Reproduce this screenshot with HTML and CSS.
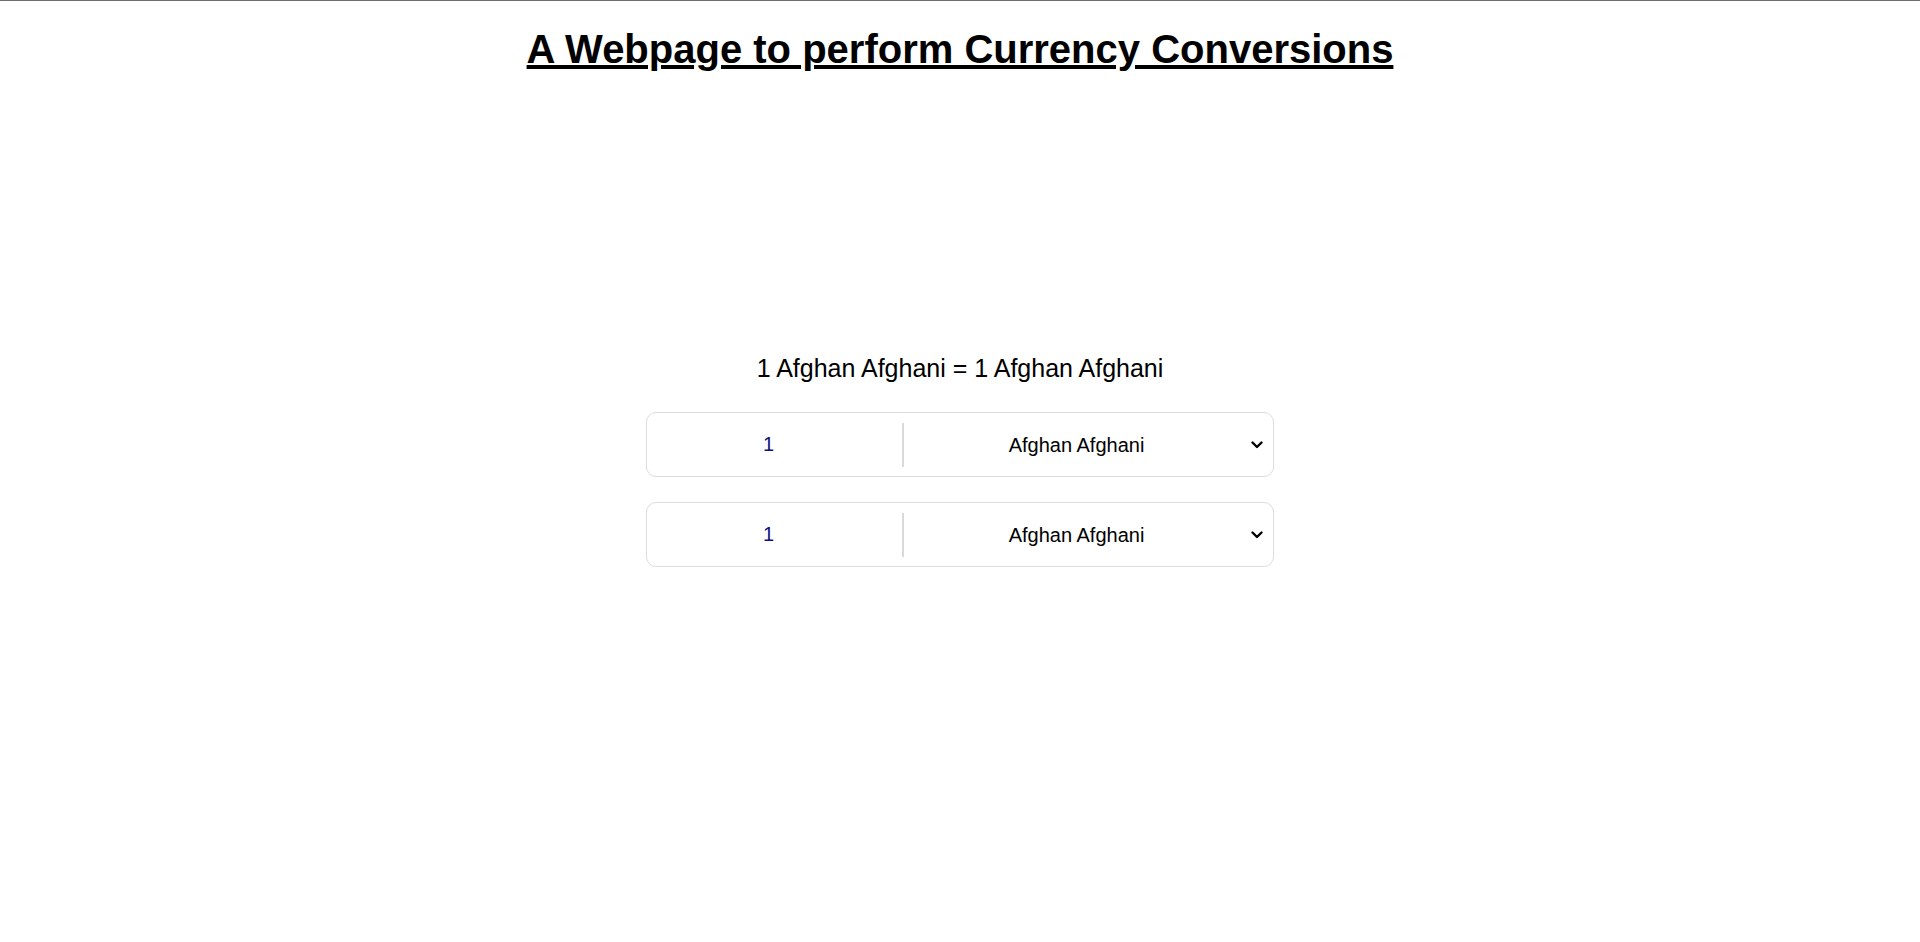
FILE: index.html
```html
<!DOCTYPE html>
<html lang="en">
<head>
<meta charset="utf-8">
<title>Currency Converter</title>
<link rel="stylesheet" href="styles.css">
</head>
<body>
<div class="topline"></div>
<h1 class="title">A Webpage to perform Currency Conversions</h1>
<main class="converter">
  <p class="result">1 Afghan Afghani = 1 Afghan Afghani</p>
  <div class="row">
    <input class="amount" type="number" value="1">
    <span class="divider"></span>
    <select class="currency">
      <option>Afghan Afghani</option>
      <option>Albanian Lek</option>
      <option>Algerian Dinar</option>
    </select>
  </div>
  <div class="row">
    <input class="amount" type="number" value="1">
    <span class="divider"></span>
    <select class="currency">
      <option>Afghan Afghani</option>
      <option>Albanian Lek</option>
      <option>Algerian Dinar</option>
    </select>
  </div>
</main>
</body>
</html>
```
FILE: styles.css
```css
html, body {
  margin: 0;
  padding: 0;
  background: #fff;
}
body {
  font-family: "Liberation Sans", Arial, sans-serif;
  color: #000;
}
.topline {
  height: 1px;
  background: #6e6e6e;
}
.title {
  margin: 26px 0 0;
  font-size: 40px;
  font-weight: bold;
  line-height: normal;
  text-align: center;
  text-decoration: underline;
}
.converter {
  display: flex;
  flex-direction: column;
  align-items: center;
  margin-top: 282px;
}
.result {
  margin: 0 0 29px;
  font-size: 25px;
  line-height: normal;
}
.row {
  box-sizing: border-box;
  width: 628px;
  height: 65px;
  border: 1px solid #dddddd;
  border-radius: 10px;
  display: flex;
  align-items: center;
  margin-bottom: 25px;
}
.amount {
  box-sizing: border-box;
  width: 255px;
  height: 100%;
  padding: 0 12px 0 0;
  border: none;
  outline: none;
  background: transparent;
  font-family: "Liberation Sans", Arial, sans-serif;
  font-size: 20px;
  text-align: center;
  color: #10107a;
  -moz-appearance: textfield;
}
.amount::-webkit-outer-spin-button,
.amount::-webkit-inner-spin-button {
  -webkit-appearance: none;
  margin: 0;
}
.divider {
  width: 2px;
  height: 44px;
  background: #d9d9d9;
}
.currency {
  flex: 1;
  height: 100%;
  border: none;
  outline: none;
  -webkit-appearance: none;
  appearance: none;
  background: transparent url("data:image/svg+xml,%3Csvg xmlns='http://www.w3.org/2000/svg' width='12' height='8' viewBox='0 0 12 8'%3E%3Cpath d='M1.5 1.5 L6 6 L10.5 1.5' fill='none' stroke='%23000' stroke-width='2.4' stroke-linecap='round' stroke-linejoin='round'/%3E%3C/svg%3E") no-repeat right 10px center;
  background-size: 12px 8px;
  font-family: "Liberation Sans", Arial, sans-serif;
  font-size: 20px;
  color: #000;
  text-align: center;
  text-align-last: center;
  padding: 0 24px 0 0;
}
```
